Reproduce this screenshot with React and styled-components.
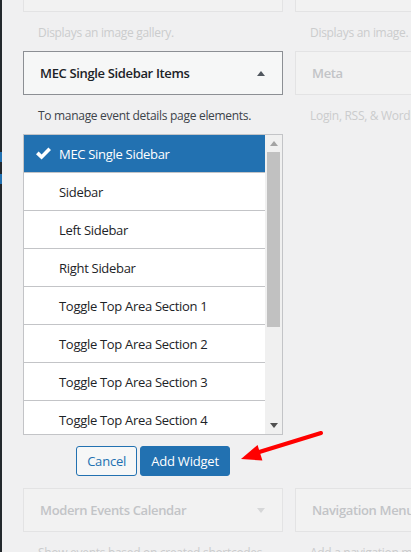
import React from 'react';
import styled, { createGlobalStyle } from 'styled-components';

const GlobalStyle = createGlobalStyle`
  html, body {
    margin: 0;
    padding: 0;
    background: #f0f0f1;
    overflow: hidden;
  }
  body {
    font-family: "Open Sans", "Noto Sans", sans-serif;
    color: #1d2327;
  }
`;

const Page = styled.div`
  position: relative;
  display: flex;
  width: 411px;
  height: 552px;
  overflow: hidden;
`;

const AdminEdge = styled.div`
  width: 2px;
  flex-shrink: 0;
  background: #23282d;
  display: flex;
  flex-direction: column;
  padding-top: 152px;
  gap: 12px;
`;

const EdgeMark = styled.div`
  width: 2px;
  height: 10px;
  background: #2271b1;
`;

const Main = styled.div`
  padding-left: 21px;
  margin-top: -32px;
`;

const Grid = styled.div`
  display: grid;
  grid-template-columns: 260px 260px;
  column-gap: 12px;
  align-items: start;
`;

const Widget = styled.div`
  display: flex;
  flex-direction: column;
  padding-bottom: ${(p) => (p.$open ? '12px' : '0')};
`;

const Card = styled.div`
  box-sizing: border-box;
  height: 44px;
  display: flex;
  align-items: center;
  justify-content: space-between;
  padding: 0 17px 0 16px;
  border: 1px solid ${(p) => (p.$active ? '#8c8f94' : '#e3e3e4')};
  background: ${(p) => (p.$active ? '#f6f7f7' : '#f2f2f2')};
  color: ${(p) => (p.$active ? '#1d2327' : '#c2c4c7')};
  font-size: 13px;
  font-weight: 600;
  letter-spacing: -0.35px;
  white-space: nowrap;
`;

const Caret = styled.span`
  width: 0;
  height: 0;
  border-left: 4px solid transparent;
  border-right: 4px solid transparent;
  ${(p) =>
    p.$up
      ? 'border-bottom: 5px solid #50575e;'
      : 'border-top: 5px solid #d6d7d8;'}
`;

const Desc = styled.div`
  padding: 12px 16px 9px 15px;
  font-size: 12px;
  line-height: 18px;
  letter-spacing: -0.3px;
  white-space: nowrap;
  color: ${(p) => (p.$active ? '#3c434a' : '#cbcccd')};
`;

const ListBox = styled.div`
  display: flex;
  height: 301px;
  box-sizing: border-box;
  border: 1px solid #c3c4c7;
  background: #fff;
`;

const Items = styled.ul`
  flex: 1;
  margin: 0;
  padding: 0;
  list-style: none;
  overflow: hidden;
`;

const Item = styled.li`
  display: flex;
  align-items: center;
  height: 37px;
  padding-left: 12px;
  border-bottom: 1px solid #c3c4c7;
  font-size: 13px;
  letter-spacing: -0.3px;
  white-space: nowrap;
  background: ${(p) => (p.$selected ? '#2271b1' : '#fff')};
  color: ${(p) => (p.$selected ? '#fff' : '#1d2327')};
`;

const CheckSlot = styled.span`
  width: 23px;
  flex-shrink: 0;
  display: flex;
  align-items: center;
`;

const ScrollTrack = styled.div`
  width: 17px;
  flex-shrink: 0;
  background: #f0f0f0;
  display: flex;
  flex-direction: column;
  align-items: center;
`;

const ScrollButton = styled.div`
  height: 17px;
  width: 17px;
  display: flex;
  align-items: center;
  justify-content: center;
`;

const ScrollThumb = styled.div`
  width: 13px;
  height: 175px;
  background: #c1c1c1;
`;

const Spacer = styled.div`
  flex: 1;
`;

const Actions = styled.div`
  display: flex;
  justify-content: center;
  gap: 3px;
  margin-top: 11px;
`;

const Button = styled.button`
  box-sizing: border-box;
  height: 30px;
  padding: 0 10px;
  border-radius: 3px;
  border: 1px solid #2271b1;
  font-family: inherit;
  font-size: 13px;
  letter-spacing: -0.2px;
  cursor: pointer;
  background: ${(p) => (p.$primary ? '#2271b1' : '#f6f7f7')};
  color: ${(p) => (p.$primary ? '#fff' : '#2271b1')};
`;

const Overlay = styled.svg`
  position: absolute;
  left: 0;
  top: 0;
  pointer-events: none;
`;

const sidebars = [
  'MEC Single Sidebar',
  'Sidebar',
  'Left Sidebar',
  'Right Sidebar',
  'Toggle Top Area Section 1',
  'Toggle Top Area Section 2',
  'Toggle Top Area Section 3',
  'Toggle Top Area Section 4',
  'Toggle Top Area Section 5',
];

const Check = () => (
  <svg width="15" height="13" viewBox="0 0 15 13">
    <path d="M0 7.2 L2.6 4.6 L5.6 7.4 L12.4 0.4 L15 3 L5.6 12.6 Z" fill="#fff" />
  </svg>
);

const Tri = ({ up, color }) => (
  <svg width="8" height="5" viewBox="0 0 8 5">
    <path d={up ? 'M0 5 L4 0 L8 5 Z' : 'M0 0 L4 5 L8 0 Z'} fill={color} />
  </svg>
);

const App = () => {
  return (
    <Page>
      <GlobalStyle />
      <AdminEdge>
        <EdgeMark />
        <EdgeMark />
      </AdminEdge>
      <Main>
        <Grid>
          <Widget>
            <Card />
            <Desc>Displays an image gallery.</Desc>
          </Widget>
          <Widget>
            <Card />
            <Desc>Displays an image.</Desc>
          </Widget>

          <Widget $open>
            <Card $active>
              MEC Single Sidebar Items
              <Caret $up />
            </Card>
            <Desc $active>To manage event details page elements.</Desc>
            <ListBox>
              <Items>
                {sidebars.map((name, i) => (
                  <Item key={name} $selected={i === 0}>
                    <CheckSlot>{i === 0 && <Check />}</CheckSlot>
                    {name}
                  </Item>
                ))}
              </Items>
              <ScrollTrack>
                <ScrollButton>
                  <Tri up color="#a3a3a3" />
                </ScrollButton>
                <ScrollThumb />
                <Spacer />
                <ScrollButton>
                  <Tri color="#505050" />
                </ScrollButton>
              </ScrollTrack>
            </ListBox>
            <Actions>
              <Button>Cancel</Button>
              <Button $primary>Add Widget</Button>
            </Actions>
          </Widget>
          <Widget>
            <Card>Meta</Card>
            <Desc>Login, RSS, &amp; WordPress.org links.</Desc>
          </Widget>

          <Widget>
            <Card>
              Modern Events Calendar
              <Caret />
            </Card>
            <Desc>Show events based on created shortcodes.</Desc>
          </Widget>
          <Widget>
            <Card>Navigation Menu</Card>
            <Desc>Add a navigation menu to your sidebar.</Desc>
          </Widget>
        </Grid>
      </Main>
      <Overlay width="411" height="552" viewBox="0 0 411 552">
        <line x1="321" y1="433" x2="256" y2="453" stroke="#f00" strokeWidth="4" strokeLinecap="round" />
        <path d="M241 459 L257.6 445 L262.4 460.6 Z" fill="#f00" />
      </Overlay>
    </Page>
  );
};

export default App;
